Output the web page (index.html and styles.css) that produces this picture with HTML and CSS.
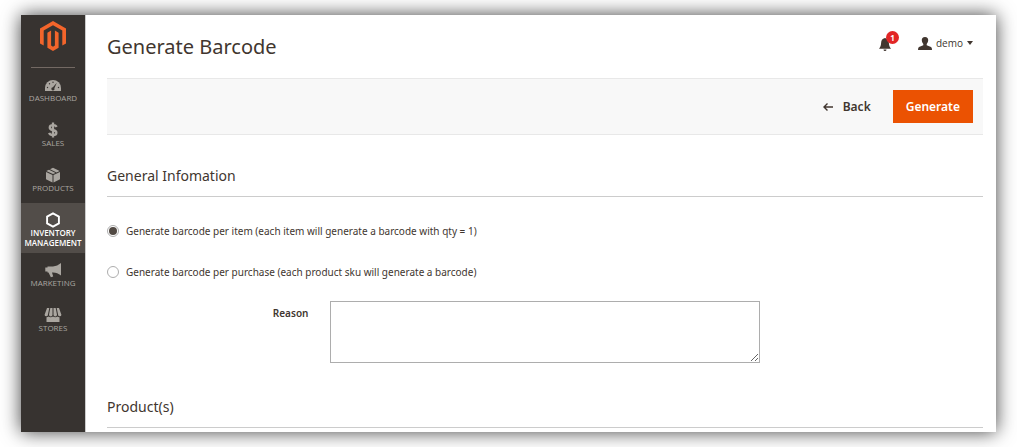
FILE: index.html
```html
<!DOCTYPE html>
<html lang="en">
<head>
<meta charset="utf-8">
<meta name="viewport" content="width=device-width, initial-scale=1">
<title>Generate Barcode</title>
<link rel="stylesheet" href="styles.css">
</head>
<body>
<div class="window">
  <aside class="sidebar">
    <a class="logo" href="#" aria-label="Magento Admin">
      <svg width="26" height="30" viewBox="0 0 26 30" fill="#f3652b"><path d="M13 0 26 7.500v15L22.300 24.600V9.600L13 4.300 3.700 9.600v15L0 22.500v-15z"/><path d="M7.400 11.700 11.100 9.600V24.600L13 25.700l1.900-1.100V9.600l3.700 2.100v15.100L13 30l-5.600-3.200z"/></svg>
    </a>
    <nav class="menu">
      <a class="menu-item" href="#">
        <svg class="menu-icon" viewBox="0 0 18 16"><path fill="currentColor" d="M1 14V11a8 8 0 0 1 16 0v3z"/><g fill="#373330"><circle cx="3.500" cy="10.500" r=".7"/><circle cx="5.500" cy="6.800" r=".7"/><circle cx="9" cy="5.300" r=".7"/><circle cx="14.500" cy="10.500" r=".7"/><path d="M12.800 5.800 10.400 11.300a1.600 1.600 0 1 1-1.500-1z"/></g></svg>
        <span>DASHBOARD</span>
      </a>
      <a class="menu-item" href="#">
        <svg class="menu-icon" viewBox="0 0 18 16"><path fill="none" stroke="currentColor" stroke-width="2.300" d="M12.700 4.900C12 3.700 10.800 3.100 9.200 3.100c-4.500 0-4.500 4.200-.5 4.900 5.200.9 4.500 5.100.3 5.100-2 0-3.400-.8-3.900-2.200M9 .5v15"/></svg>
        <span>SALES</span>
      </a>
      <a class="menu-item" href="#">
        <svg class="menu-icon" viewBox="0 0 18 16" fill="currentColor"><path d="M8.500 7.900v7.600L2 12.300V5zM9.500 7.900v7.600l6.500-3.200V5zM5 2.700 11.600 5.900 9 7.100 2.300 4zM6 2.200 9 .8l6.700 3.200-3.100 1.500z"/></svg>
        <span>PRODUCTS</span>
      </a>
      <a class="menu-item menu-item-active" href="#" aria-current="page">
        <svg class="menu-icon" viewBox="0 0 18 16"><path fill="none" stroke="currentColor" stroke-width="1.900" d="M9 1.300 14.900 4.600v6.800L9 14.700 3.100 11.400V4.600z"/></svg>
        <span>INVENTORY MANAGEMENT</span>
      </a>
      <a class="menu-item" href="#">
        <svg class="menu-icon" viewBox="0 0 18 16" fill="currentColor"><path d="M17 1v12.500c-2.500-1.800-5-2.700-8-2.900V4.500c3-.3 5.500-1.500 8-3.500zM9.200 4.500v6.100H3.500V4.500zM1.300 5.500H3.700v4H1.300zM4.500 10.600H8l1.200 4-2.300.7z"/></svg>
        <span>MARKETING</span>
      </a>
      <a class="menu-item" href="#">
        <svg class="menu-icon" viewBox="0 0 18 16" fill="currentColor"><path d="M3 1h2.300L3.900 7.700a1.500 1.500 0 0 1-3.300 0zM6.300 1h2.200v6.700a1.700 1.700 0 0 1-3.500 0zM9.500 1h2.200L13 7.700a1.700 1.700 0 0 1-3.500 0zM12.700 1H15l2.400 6.700a1.500 1.500 0 0 1-3.300 0zM2.500 10.300c1 0 1.600-.3 2-.8 1 1.100 3.400 1.100 4.500 0 1.100 1.100 3.500 1.100 4.500 0 .4.500 1 .8 2 .8V15h-13z"/></svg>
        <span>STORES</span>
      </a>
    </nav>
  </aside>
  <main class="content">
    <header class="page-header">
      <h1 class="page-title">Generate Barcode</h1>
      <div class="account">
        <button class="notifications" type="button" aria-label="Notifications">
          <svg width="12" height="13" viewBox="0 0 12 13" fill="#41362f"><path d="M6 0C3 .5 2.300 2.500 2.100 5 2 7.500 1.300 9 0 10.700h12C10.700 9 10 7.500 9.900 5 9.700 2.500 9 .5 6 0zM4.500 11.500h3a1.500 1.500 0 0 1-3 0z"/></svg>
          <span class="badge">1</span>
        </button>
        <button class="user" type="button">
          <svg width="14" height="13" viewBox="0 0 14 13" fill="#41362f"><path d="M7 0c2.300 0 3.300 1.300 3.200 3.300C10.100 5.200 9.300 6 8.700 7v1.300L13 10q1 .5 1 3H0q0-2.500 1-3l4.300-1.700V7C4.700 6 3.900 5.200 3.800 3.300 3.700 1.300 4.700 0 7 0z"/></svg>
          <span>demo</span>
          <svg width="6" height="4" viewBox="0 0 6 4" fill="#41362f"><path d="M0 0h6L3 4z"/></svg>
        </button>
      </div>
    </header>
    <div class="toolbar">
      <button class="back" type="button">
        <svg width="10" height="8" viewBox="0 0 10 8" fill="none" stroke="currentColor" stroke-width="1.400"><path d="M10 4H1M4.500.5 1 4l3.500 3.500"/></svg>
        <span>Back</span>
      </button>
      <button class="generate" type="button">Generate</button>
    </div>
    <form class="form">
      <h2 class="section-title">General Infomation</h2>
      <div class="fields">
        <label class="option"><input class="radio" type="radio" name="mode" checked><span>Generate barcode per item (each item will generate a barcode with qty = 1)</span></label>
        <label class="option"><input class="radio" type="radio" name="mode"><span>Generate barcode per purchase (each product sku will generate a barcode)</span></label>
        <div class="field">
          <label class="field-label" for="reason">Reason</label>
          <textarea class="textarea" id="reason"></textarea>
        </div>
      </div>
      <h2 class="section-title">Product(s)</h2>
    </form>
  </main>
</div>
</body>
</html>
```
FILE: styles.css
```css
* {
  box-sizing: border-box;
}

body {
  margin: 0;
  padding: 15px 21px;
  background: #fff;
  color: #41362f;
  font: 10px/16px "Noto Sans", "Open Sans", sans-serif;
}

button {
  padding: 0;
  border: 0;
  background: none;
  color: inherit;
  font: inherit;
}

.window {
  display: flex;
  background: #fff;
  box-shadow: 0 0 18px rgba(0, 0, 0, 0.75);
}

.sidebar {
  flex: 0 0 64px;
  background: #373330;
}

.logo {
  display: flex;
  justify-content: center;
  height: 53px;
  margin: 0 10px;
  padding-top: 6px;
  border-bottom: 1px solid #736963;
}

.menu-item {
  display: flex;
  flex-direction: column;
  align-items: center;
  padding: 9px 2px 10px;
  color: #aaa6a0;
  font-family: "Open Sans", sans-serif;
  font-size: 8px;
  line-height: 10px;
  text-align: center;
  text-decoration: none;
}

.menu-item-active {
  padding-bottom: 5px;
  background: #524d49;
  color: #fff;
  font-weight: 600;
}

.menu-icon {
  width: 18px;
  height: 16px;
}

.content {
  flex: 1;
  min-width: 0;
  padding: 0 13px 4px 21px;
  border-left: 1px solid #ccc;
}

.page-header {
  display: flex;
  justify-content: space-between;
  height: 63px;
  padding: 16px 10px 0 0;
}

.page-title {
  margin: 0;
  font-size: 20px;
  font-weight: 400;
  line-height: 32px;
}

.account {
  display: flex;
  align-items: center;
  gap: 26px;
  height: 24px;
}

.notifications {
  position: relative;
  display: flex;
  width: 13px;
  padding-top: 3px;
}

.badge {
  position: absolute;
  top: -4px;
  left: 7px;
  width: 13px;
  height: 13px;
  border-radius: 50%;
  background: #e22626;
  color: #fff;
  font-size: 8px;
  font-weight: 700;
  line-height: 13px;
  text-align: center;
}

.user {
  display: flex;
  align-items: center;
  gap: 4px;
  font-family: "Open Sans", sans-serif;
}

.toolbar {
  display: flex;
  align-items: center;
  justify-content: flex-end;
  gap: 22px;
  padding: 11px 10px;
  border: solid #e8e8e8;
  border-width: 1px 0;
  background: #f8f8f8;
  font-size: 12px;
  font-weight: 600;
}

.back {
  display: flex;
  align-items: center;
  gap: 10px;
}

.generate {
  height: 33px;
  padding: 0 13px;
  background: #eb5202;
  color: #fff;
}

.section-title {
  margin: 0;
  padding-bottom: 8px;
  border-bottom: 1px solid #ccc;
  font-size: 14px;
  font-weight: 400;
  line-height: 24px;
}

.form {
  padding-top: 29px;
}

.fields {
  padding: 26px 0 32px;
}

.option {
  display: flex;
  align-items: center;
  gap: 7px;
  width: fit-content;
  margin-bottom: 25px;
}

.radio {
  display: grid;
  place-items: center;
  width: 12px;
  height: 12px;
  margin: 0;
  border: 1px solid #adadad;
  border-radius: 50%;
  background: #fff;
  appearance: none;
}

.radio:checked::before {
  width: 8px;
  height: 8px;
  border-radius: 50%;
  background: #514943;
  content: "";
}

.field {
  display: grid;
  grid-template-columns: 23% 49%;
  column-gap: 22px;
  margin-top: -4px;
}

.field-label {
  padding-top: 4px;
  font-weight: 600;
  text-align: right;
}

.textarea {
  width: 100%;
  height: 62px;
  border: 1px solid #adadad;
  background: #fff;
  font: inherit;
  resize: vertical;
}
```
